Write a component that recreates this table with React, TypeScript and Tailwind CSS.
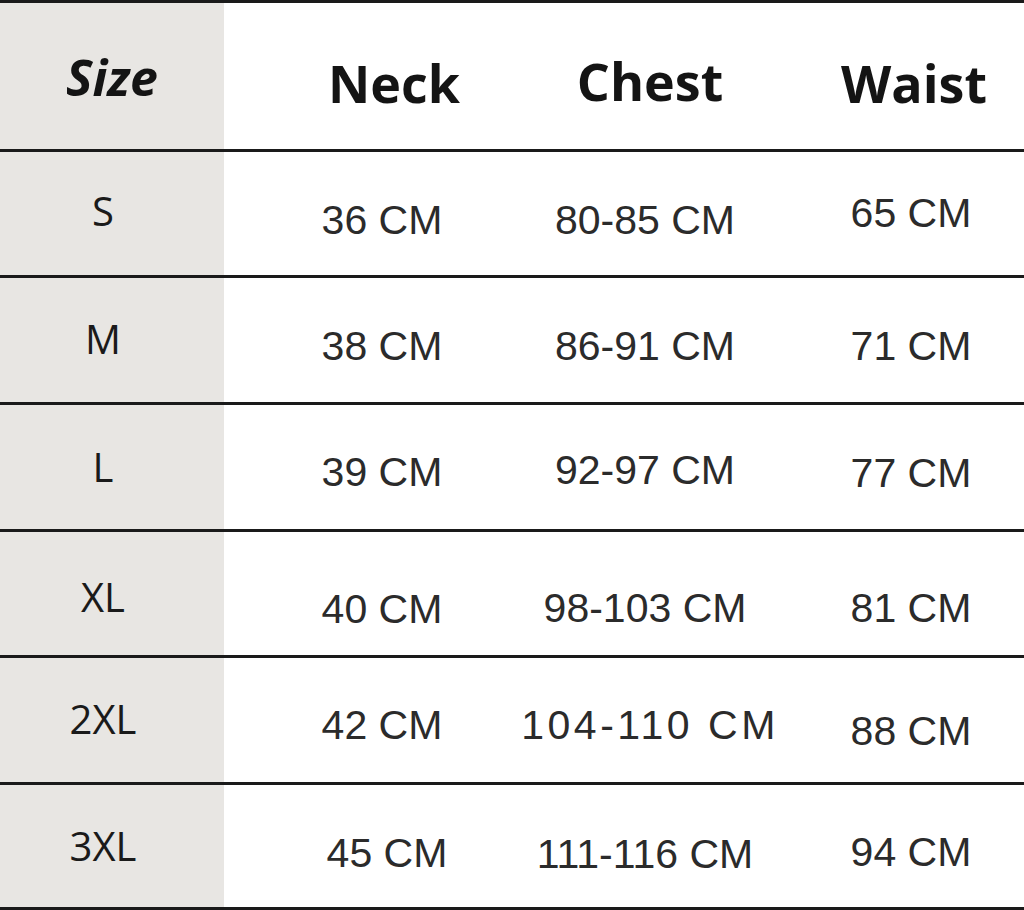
import React from 'react';

type Cell = { text: string; cls?: string };
type Row = { size: Cell; neck: Cell; chest: Cell; waist: Cell; h: string };

const rows: Row[] = [
  { h: 'h-[126px]', size: { text: 'S', cls: 'pb-[6px]' }, neck: { text: '36 CM', cls: 'pt-[14px]' }, chest: { text: '80-85 CM', cls: 'pt-[14px]' }, waist: { text: '65 CM' } },
  { h: 'h-[127px]', size: { text: 'M', cls: 'pb-[3px]' }, neck: { text: '38 CM', cls: 'pt-[13px]' }, chest: { text: '86-91 CM', cls: 'pt-[13px]' }, waist: { text: '71 CM', cls: 'pt-[13px]' } },
  { h: 'h-[127px]', size: { text: 'L' }, neck: { text: '39 CM', cls: 'pt-[11px]' }, chest: { text: '92-97 CM', cls: 'pt-[7px]' }, waist: { text: '77 CM', cls: 'pt-[13px]' } },
  { h: 'h-[126px]', size: { text: 'XL', cls: 'pt-[6px]' }, neck: { text: '40 CM', cls: 'pt-[32px]' }, chest: { text: '98-103 CM', cls: 'pt-[30px]' }, waist: { text: '81 CM', cls: 'pt-[30px]' } },
  { h: 'h-[127px]', size: { text: '2XL', cls: 'pb-[3px]' }, neck: { text: '42 CM', cls: 'pt-[11px]' }, chest: { text: '104-110 CM', cls: 'pt-[11px] pl-[10px] tracking-[3.5px]' }, waist: { text: '88 CM', cls: 'pt-[23px]' } },
  { h: 'h-[125px]', size: { text: '3XL' }, neck: { text: '45 CM', cls: 'pt-[15px] pl-[10px]' }, chest: { text: '111-116 CM', cls: 'pt-[17px]' }, waist: { text: '94 CM', cls: 'pt-[13px]' } },
];

const grid = 'grid grid-cols-[224px_316px_210px_274px] border-b-[3px] border-[#1a1a1a]';
const value = "flex items-center justify-center whitespace-nowrap font-['Liberation_Sans',Arial,sans-serif] text-[41px] leading-none text-[#2b2b2b]";

export default function App() {
  return (
    <div className="w-[1024px] h-[910px] bg-white overflow-hidden">
      <div className={`${grid} h-[152px] border-t-[3px]`}>
        <div className="flex items-center justify-center bg-[#e8e6e3] pt-[2px] font-['Open_Sans',sans-serif] text-[50px] font-bold italic leading-none text-[#141414]">
          Size
        </div>
        <div className="flex items-center justify-center pl-[24px] pt-[13px] font-['Open_Sans',sans-serif] text-[52px] font-bold leading-none text-[#141414]">
          Neck
        </div>
        <div className="flex items-center justify-center pl-[10px] pt-[9px] font-['Open_Sans',sans-serif] text-[52px] font-bold leading-none text-[#141414]">
          Chest
        </div>
        <div className="flex items-center justify-center pl-[54px] pt-[13px] font-['Open_Sans',sans-serif] text-[52px] font-bold leading-none text-[#141414]">
          Waist
        </div>
      </div>
      {rows.map((r) => (
        <div key={r.size.text} className={`${grid} ${r.h}`}>
          <div className={`flex items-center justify-center bg-[#e8e6e3] pr-[18px] font-['Open_Sans',sans-serif] text-[40px] leading-none text-[#1a1a1a] ${r.size.cls ?? ''}`}>
            {r.size.text}
          </div>
          <div className={`${value} ${r.neck.cls ?? ''}`}>{r.neck.text}</div>
          <div className={`${value} ${r.chest.cls ?? ''}`}>{r.chest.text}</div>
          <div className={`${value} pl-[48px] ${r.waist.cls ?? ''}`}>{r.waist.text}</div>
        </div>
      ))}
    </div>
  );
}
